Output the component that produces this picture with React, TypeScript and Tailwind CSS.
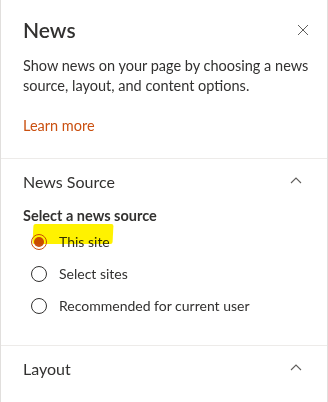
import React from "react";

function Chevron() {
  return (
    <svg width="12" height="8" viewBox="0 0 12 8" fill="none">
      <path d="M1 7 L6 2 L11 7" stroke="#605e5c" strokeWidth="1.1" />
    </svg>
  );
}

function Radio({ checked, label }: { checked?: boolean; label: string }) {
  return (
    <label className="flex items-center h-[20px]">
      <span
        className={
          "w-[16px] h-[16px] rounded-full border flex items-center justify-center ml-[8px] " +
          (checked ? "border-[#ca5010]" : "border-[#323130]")
        }
      >
        {checked && <span className="w-[10px] h-[10px] rounded-full bg-[#ca5010]" />}
      </span>
      <span className="ml-[12px] text-[14px] text-[#323130]">{label}</span>
    </label>
  );
}

function Section({ title, children }: { title: string; children?: React.ReactNode }) {
  return (
    <div className="border-t border-[#edebe9] px-[22px]">
      <div className="flex items-center justify-between h-[46px]">
        <span className="text-[16px] text-[#323130]">{title}</span>
        <span className="mr-[3px] mb-[4px]">
          <Chevron />
        </span>
      </div>
      {children}
    </div>
  );
}

export default function App() {
  const sources = ["This site", "Select sites", "Recommended for current user"];

  return (
    <div
      className="w-[328px] h-[402px] bg-white border-l border-r border-[#e1dfdd] overflow-hidden"
      style={{ fontFamily: 'Lato, "Open Sans", sans-serif' }}
    >
      <div className="px-[22px] pt-[13px]">
        <div className="flex items-center justify-between h-[34px]">
          <h1 className="text-[21px] font-semibold text-[#323130]">News</h1>
          <svg width="12" height="12" viewBox="0 0 12 12" className="mr-[-4px]">
            <path d="M1 1 L11 11 M11 1 L1 11" stroke="#605e5c" strokeWidth="1" />
          </svg>
        </div>
        <p className="mt-[9px] mr-[-16px] text-[14.5px] leading-[20px] text-[#323130] whitespace-nowrap">
          Show news on your page by choosing a news
          <br />
          source, layout, and content options.
        </p>
        <div className="mt-[19px] text-[14.5px] text-[#ca5010] pb-[21px]">Learn more</div>
      </div>

      <Section title="News Source">
        <div className="text-[14.5px] font-bold text-[#323130]">Select a news source</div>
        <div className="relative flex flex-col gap-[12px] mt-[5px] pb-[29px]">
          {sources.map((s, i) => (
            <Radio key={s} label={s} checked={i === 0} />
          ))}
          <div className="absolute left-[10px] top-[-8px] w-[80px] h-[20px] bg-[#fff200] mix-blend-multiply -skew-x-3 rounded-[2px]" />
        </div>
      </Section>

      <Section title="Layout" />
    </div>
  );
}
